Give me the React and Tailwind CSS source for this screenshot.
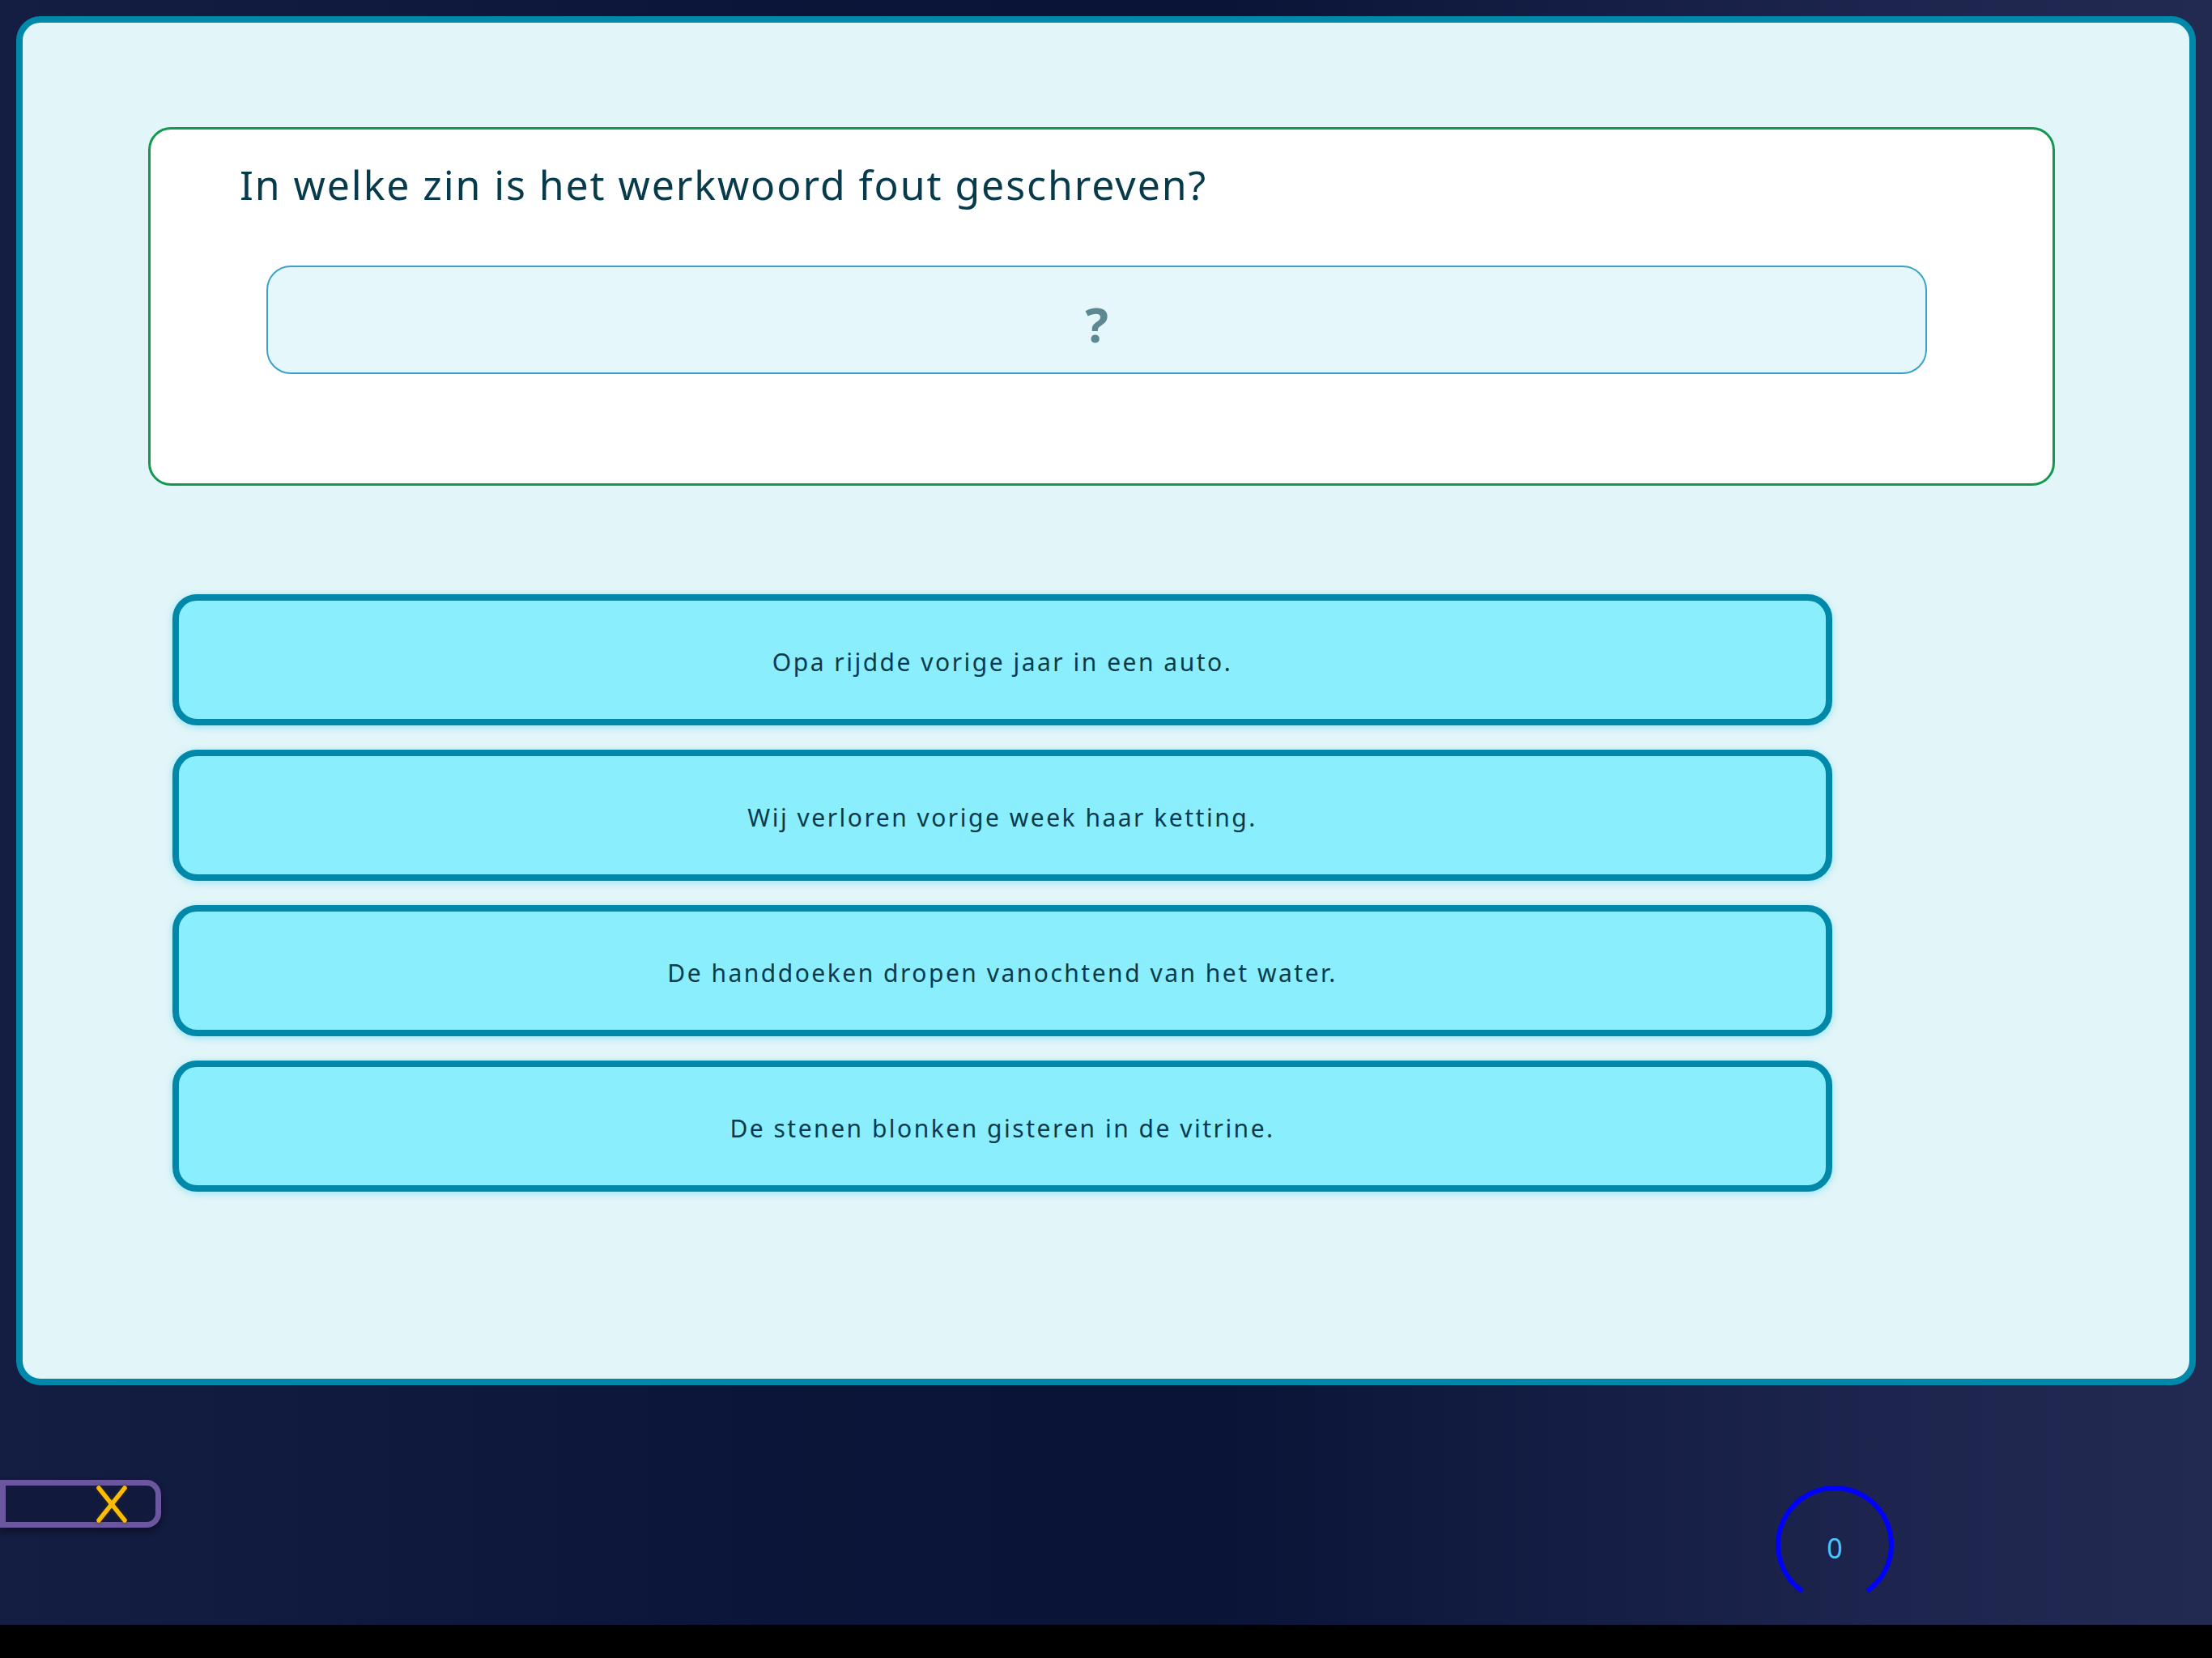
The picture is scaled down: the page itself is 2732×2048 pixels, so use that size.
import React from 'react'

const options = [
  'Opa rijdde vorige jaar in een auto.',
  'Wij verloren vorige week haar ketting.',
  'De handdoeken dropen vanochtend van het water.',
  'De stenen blonken gisteren in de vitrine.',
]

const font = { fontFamily: '"Noto Sans", "DejaVu Sans", sans-serif' }

// close button: yellow cross in a purple tab
const CloseTab = () => (
  <button className="mt-[1828px] h-[59px] w-[199px] border-[7px] border-[#6b56a0] rounded-r-[18px] bg-[#111a3d] shadow-[0_4px_10px_rgba(0,0,0,0.45)] flex items-center">
    <svg width="44" height="50" viewBox="0 0 44 50" className="ml-[109px] drop-shadow-[0_0_2px_rgba(70,50,0,0.9)]">
      <line x1="6" y1="5" x2="38" y2="45" stroke="#fbbc05" strokeWidth="5.5" strokeLinecap="round" />
      <line x1="38" y1="5" x2="6" y2="45" stroke="#fbbc05" strokeWidth="5.5" strokeLinecap="round" />
    </svg>
  </button>
)

// score ring, open at the bottom
const ScoreRing = ({ value }) => (
  <div className="relative mt-[1833px] mr-[391px] w-[150px] h-[150px]">
    <svg width="150" height="150" viewBox="0 0 150 150">
      <path d="M34.85 132.3 A70 70 0 1 1 115.15 132.3" fill="none" stroke="#0000ff" strokeWidth="6" />
    </svg>
    <span className="absolute inset-0 flex items-center justify-center pt-[8px] text-[34px] text-[#4fc3f7]" style={font}>{value}</span>
  </div>
)

const App = () => {
  return (
    <div className="w-[2732px] h-[2048px] overflow-hidden bg-black flex flex-col">
      <div className="relative h-[2007px] bg-[linear-gradient(to_right,#141d42_0%,#0b1539_35%,#0a1437_55%,#1d254e_85%,#222a52_100%)]">
        <div className="absolute left-[20px] top-[20px] w-[2692px] h-[1691px] rounded-[30px] border-[8px] border-[#0088ab] bg-[#e2f5f9] flex flex-col">
          <div className="mt-[129px] ml-[155px] w-[2355px] h-[443px] rounded-[28px] border-[3px] border-[#12994f] bg-white flex flex-col">
            <h1 className="pt-[39px] pl-[110px] text-[50px] leading-[58px] tracking-[1.9px] text-[#073b4c]" style={font}>
              In welke zin is het werkwoord fout geschreven?
            </h1>
            <div className="mt-[71px] ml-[143px] w-[2051px] h-[134px] rounded-[30px] border-2 border-[#3aa2c7] bg-[#e6f7fb] flex items-center justify-center">
              <span className="text-[60px] font-bold leading-none text-[#5b8891] pt-[10px]" style={font}>?</span>
            </div>
          </div>

          <div className="mt-[134px] ml-[185px] w-[2050px] flex flex-col gap-[30px]">
            {options.map(text => (
              <button
                key={text}
                className="h-[162px] w-full rounded-[30px] border-[8px] border-[#0088ab] bg-[#8aeefd] shadow-[0_2px_10px_rgba(0,200,240,0.35)] flex items-center justify-center pt-[4px] text-[30px] tracking-[2.5px] text-[#083c4d]"
                style={font}>
                {text}
              </button>
            ))}
          </div>
        </div>

        <div className="absolute inset-0 flex justify-between items-start pointer-events-none">
          <CloseTab />
          <ScoreRing value={0} />
        </div>
      </div>
    </div>
  )
}

export default App
